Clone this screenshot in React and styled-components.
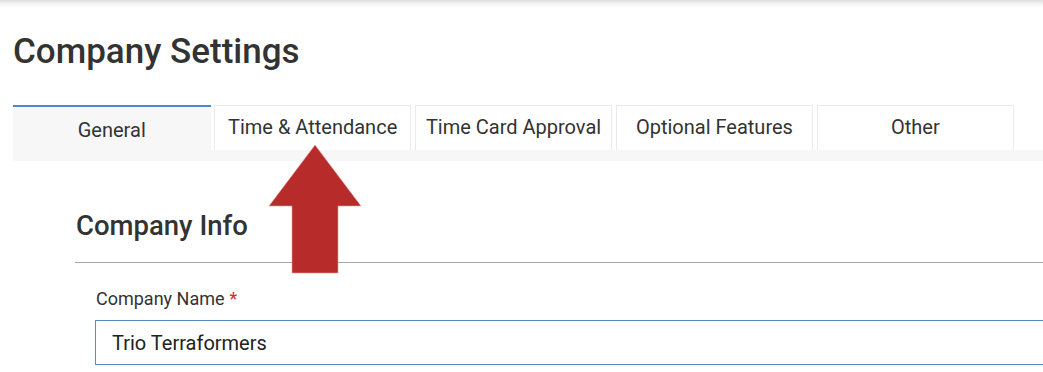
import React from "react";
import styled, { createGlobalStyle } from "styled-components";

const Global = createGlobalStyle`
  html, body { margin: 0; padding: 0; background: #fff; }
  body { font-family: Roboto, "Noto Sans", Arial, sans-serif; color: #333; overflow: hidden; }
`;

const Root = styled.div`
  position: relative;
`;

const Shadow = styled.div`
  height: 8px;
  background: linear-gradient(to bottom, rgba(0,0,0,0.13), rgba(0,0,0,0.04) 50%, rgba(0,0,0,0));
`;

const Page = styled.div`
  padding-left: 13px;
`;

const Title = styled.h1`
  margin: 23px 0 0 0;
  font-size: 35px;
  line-height: 42px;
  font-weight: 500;
  color: #333;
`;

const TabBar = styled.div`
  margin-top: 32px;
  display: flex;
  gap: 3.4px;
  background: linear-gradient(to bottom, #fff 45px, #f7f7f7 45px);
  height: 56px;
  align-items: flex-start;
`;

const Tab = styled.div`
  box-sizing: border-box;
  width: 197.5px;
  flex: none;
  height: ${(p) => (p.$active ? "56px" : "45px")};
  display: flex;
  justify-content: center;
  padding-top: ${(p) => (p.$active ? "11px" : "9px")};
  font-size: 20px;
  color: #333;
  background: ${(p) => (p.$active ? "#f7f7f7" : "#fff")};
  border: ${(p) => (p.$active ? "none" : "1px solid #ebebeb")};
  border-bottom: none;
  border-top: ${(p) => (p.$active ? "2px solid #4a8cc6" : "1px solid #ebebeb")};
`;

const Section = styled.div`
  padding-left: 62px;
`;

const SectionTitle = styled.h2`
  margin: 48px 0 0 0;
  font-size: 27.5px;
  line-height: 34px;
  font-weight: 500;
  color: #333;
  padding-left: 1px;
  padding-bottom: 19px;
  border-bottom: 1px solid #a6a6a6;
`;

const Field = styled.div`
  padding-left: 20px;
  padding-top: 24px;
`;

const Label = styled.label`
  display: block;
  font-size: 18px;
  line-height: 24px;
  color: #333;
  padding-left: 1px;
`;

const Required = styled.span`
  color: #d9262a;
  margin-left: 5px;
`;

const Input = styled.div`
  box-sizing: border-box;
  margin-top: 9px;
  height: 45px;
  border: 1px solid #5b8bbd;
  border-right: none;
  padding: 0 16px;
  display: flex;
  align-items: center;
  font-size: 20px;
  color: #222;
`;

const Arrow = styled.svg`
  position: absolute;
  left: 256px;
  top: 137px;
`;

const tabs = ["General", "Time & Attendance", "Time Card Approval", "Optional Features", "Other"];

export default function App() {
  return (
    <Root>
      <Global />
      <Shadow />
      <Page>
        <Title>Company Settings</Title>
        <TabBar>
          {tabs.map((t, i) => (
            <Tab key={t} $active={i === 0}>{t}</Tab>
          ))}
        </TabBar>
        <Section>
          <SectionTitle>Company Info</SectionTitle>
          <Field>
            <Label>
              Company Name<Required>*</Required>
            </Label>
            <Input>Trio Terraformers</Input>
          </Field>
        </Section>
      </Page>
      <Arrow width="120" height="140" viewBox="256 137 120 140">
        <polygon
          points="315,145 361,206 338,206 338,273 292,273 292,206 269,206"
          fill="#b82b2b"
          stroke="#e8a0a0"
          strokeWidth="0.6"
        />
      </Arrow>
    </Root>
  );
}
